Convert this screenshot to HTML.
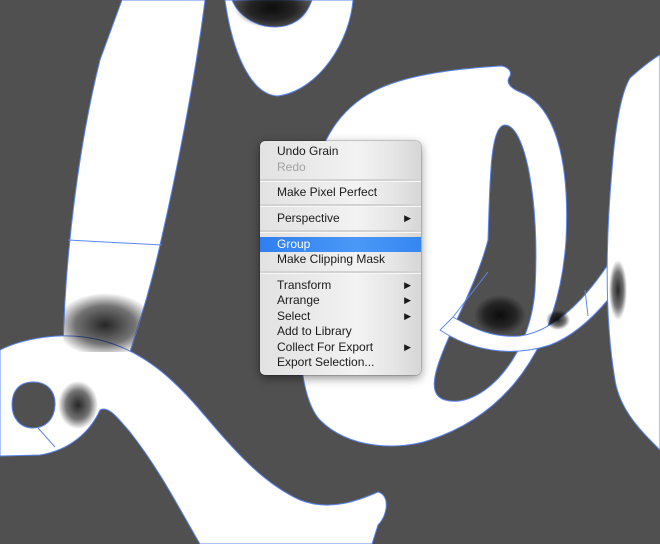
<!DOCTYPE html>
<html><head><meta charset="utf-8"><style>
html,body{margin:0;padding:0;width:660px;height:544px;overflow:hidden;background:#505050}
svg{position:absolute;left:0;top:0}
.menu{position:absolute;left:260px;top:141px;width:161px;height:234px;border-radius:5px;
background:linear-gradient(90deg,#e2e2e2 0%,#ececec 40%,#f3f3f3 60%,#e4e4e4 85%,#d6d6d6 100%);
box-shadow:0 3px 10px rgba(0,0,0,.45),0 0 0 0.5px rgba(0,0,0,.3);
font-family:"Liberation Sans",sans-serif;font-size:12px;color:#1a1a1a}
.it{position:absolute;left:0;right:0;height:15px;line-height:15px;padding-left:17px}
.dis{color:#a2a2a2}
.sep{position:absolute;left:0;right:0;height:2px;background:#d2d2d2;border-bottom:1px solid #f8f8f8}
.hl{background:linear-gradient(90deg,#2f7ff0,#4a98f6 60%,#3586f1);color:#fff}
.ar{position:absolute;right:10px;top:0;font-size:9px}
</style></head><body>
<svg width="660" height="544" viewBox="0 0 660 544">
<defs>
<radialGradient id="rg"><stop offset="0" stop-color="#000" stop-opacity=".85"/><stop offset=".6" stop-color="#000" stop-opacity=".55"/><stop offset="1" stop-color="#000" stop-opacity="0"/></radialGradient>
<clipPath id="stem"><path d="M122,0 L205,0 C195,80 175,180 160,245 C150,290 140,320 130,352 L63,352 C65,250 80,140 100,60 Z"/></clipPath>
</defs>
<g fill="#fff" stroke="#5b86f0" stroke-width="1">
<path d="M122,0 L205,0 C195,80 175,180 160,245 C150,290 140,320 130,352 L63,352 C65,250 80,140 100,60 Z"/>
<path fill-rule="evenodd" d="M225,0 L353,0 C350,40 320,90 278,96 C250,95 232,50 225,0 Z M232,0 L312,0 C305,20 290,27 275,27 C255,27 238,15 232,0 Z"/>
<path fill-rule="evenodd" d="M500,66 C470,68 420,72 385,86 C345,102 320,135 310,190 C295,280 292,390 320,420 C350,450 400,450 430,440 C520,410 560,330 566,240 C570,160 555,105 520,92 C510,88 505,82 510,76 C512,70 506,66 500,66 Z M505,125 C525,125 540,200 535,290 C530,360 480,410 445,400 C410,390 470,310 488,240 C490,180 490,125 505,125 Z"/>
<path d="M453,317 C475,330 495,338 520,336 C560,330 600,290 645,200 L660,190 L660,215 C630,280 590,330 550,345 C510,358 470,350 440,330 Z"/>
<path d="M630,78 C650,60 660,55 660,55 L660,450 C640,430 620,410 615,380 C605,320 605,250 612,170 C615,130 620,95 630,78 Z"/>
<path fill-rule="evenodd" d="M0,350 C20,340 60,330 100,340 C140,350 170,375 200,410 C230,445 260,482 300,500 C330,512 360,500 378,492 C390,495 388,515 378,525 L372,544 L200,544 C180,510 160,470 130,432 C118,418 108,405 100,410 C90,432 70,450 40,455 L0,456 Z M33,382 C48,382 56,392 55,406 C54,420 45,428 33,428 C20,428 12,418 12,405 C12,390 20,382 33,382 Z"/>
</g>
<g stroke="#5b86f0" stroke-width="1" fill="none">
<line x1="68" y1="240" x2="162" y2="245"/>
<line x1="38" y1="428" x2="55" y2="447"/>
<line x1="453" y1="317" x2="488" y2="272"/>
<line x1="585" y1="290" x2="588" y2="316"/>
</g>
<g fill="url(#rg)">
<ellipse cx="105" cy="325" rx="50" ry="32" clip-path="url(#stem)"/>
<ellipse cx="78" cy="405" rx="20" ry="24"/>
<ellipse cx="272" cy="8" rx="38" ry="20"/>
<ellipse cx="500" cy="315" rx="26" ry="20"/>
<ellipse cx="558" cy="320" rx="12" ry="10"/>
<ellipse cx="618" cy="290" rx="9" ry="30"/>
</g>
</svg>
<div class="menu">
<div class="it" style="top:3px">Undo Grain</div>
<div class="it dis" style="top:19px">Redo</div>
<div class="sep" style="top:38px"></div>
<div class="it" style="top:44px">Make Pixel Perfect</div>
<div class="sep" style="top:63px"></div>
<div class="it" style="top:70px">Perspective<span class="ar">▶</span></div>
<div class="sep" style="top:89px"></div>
<div class="it hl" style="top:96px">Group</div>
<div class="it" style="top:111px">Make Clipping Mask</div>
<div class="sep" style="top:130px"></div>
<div class="it" style="top:137px">Transform<span class="ar">▶</span></div>
<div class="it" style="top:152px">Arrange<span class="ar">▶</span></div>
<div class="it" style="top:168px">Select<span class="ar">▶</span></div>
<div class="it" style="top:183px">Add to Library</div>
<div class="it" style="top:199px">Collect For Export<span class="ar">▶</span></div>
<div class="it" style="top:214px">Export Selection...</div>
</div>
</body></html>
